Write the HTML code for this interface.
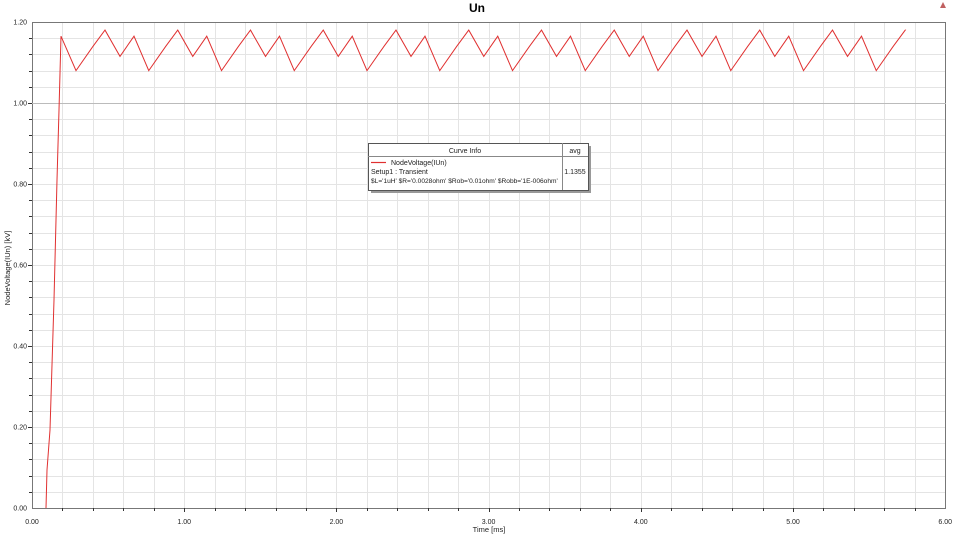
<!DOCTYPE html>
<html><head><meta charset="utf-8"><style>
body{margin:0;background:#fff;width:954px;height:540px;overflow:hidden;font-family:"Liberation Sans",sans-serif}
</style></head><body>
<svg id="s" width="954" height="540" xmlns="http://www.w3.org/2000/svg" font-family="Liberation Sans, sans-serif">
<text x="477" y="12" font-size="12" font-weight="bold" text-anchor="middle">Un</text>
<path d="M940 8 L943 2 L946 8 Z" fill="#c06060"/>
<g id="grid" stroke="#e4e4e4" stroke-width="1"></g>
<rect x="32.5" y="22.5" width="913" height="486" fill="none" stroke="#777"/>
<line x1="32" y1="103.5" x2="946" y2="103.5" stroke="#bbb"/>
<g id="ticks" stroke="#333"></g>
<g id="lbl" font-size="7" fill="#222"></g>
<text transform="translate(10,268) rotate(-90)" font-size="7.5" text-anchor="middle" fill="#222">NodeVoltage(IUn) [kV]</text>
<text x="489" y="532" font-size="7.5" text-anchor="middle" fill="#222">Time [ms]</text>
<path id="w" fill="none" stroke="#e03030" stroke-width="1"/>
<rect x="371" y="146" width="220" height="47" fill="#999"/>
<rect x="368.5" y="143.5" width="220" height="47" fill="#fff" stroke="#555"/>
<line x1="368" y1="156.5" x2="588" y2="156.5" stroke="#888"/>
<line x1="562.5" y1="143" x2="562.5" y2="190" stroke="#888"/>
<text x="465" y="153" font-size="7" text-anchor="middle" fill="#222">Curve Info</text>
<text x="575" y="153" font-size="7" text-anchor="middle" fill="#222">avg</text>
<line x1="371" y1="162.5" x2="386" y2="162.5" stroke="#e03030" stroke-width="1.2"/>
<text x="391" y="165" font-size="7" fill="#222">NodeVoltage(IUn)</text>
<text x="371" y="174" font-size="7" fill="#222">Setup1 : Transient</text>
<text x="371" y="183" font-size="6.6" fill="#222">$L='1uH' $R='0.0028ohm' $Rob='0.01ohm' $Robb='1E-006ohm'</text>
<text x="575" y="174" font-size="7" text-anchor="middle" fill="#222">1.1355</text>
</svg>
<script>
var N="http://www.w3.org/2000/svg";
function el(p,t,a,txt){var e=document.createElementNS(N,t);for(var k in a)e.setAttribute(k,a[k]);if(txt)e.textContent=txt;document.getElementById(p).appendChild(e);}
var X=function(t){return 32+t*152.2}, Y=function(v){return 508-v*405};
for(var i=1;i<30;i++){var x=Math.round(X(i*0.2))+.5;el("grid","line",{x1:x,y1:22,x2:x,y2:508});el("ticks","line",{x1:x,y1:508,x2:x,y2:i%5==0?512:511});}
for(var j=1;j<30;j++){var y=Math.round(Y(j*0.04))+.5;el("grid","line",{x1:32,y1:y,x2:946,y2:y});el("ticks","line",{x1:j%5==0?28:29,y1:y,x2:32,y2:y});}
for(var i=0;i<=6;i++)el("lbl","text",{x:X(i),y:524,"text-anchor":"middle"},i.toFixed(2));
for(var j=0;j<=6;j++)el("lbl","text",{x:27,y:Y(j*0.2)+2.5,"text-anchor":"end"},(j*0.2).toFixed(2));
var d="M46 508 L47 470 L50 430 L54 300 L57 180 L59 110 L61 "+Y(1.165);
var P=72.75,x0=76;
for(var k=0;k<12;k++){var b=x0+k*P;
d+=" L"+b+" "+Y(1.08)+" L"+(b+17)+" "+Y(1.14)+" L"+(b+29)+" "+Y(1.18);
if(b+29>=904)break;
d+=" L"+(b+44)+" "+Y(1.115)+" L"+(b+58)+" "+Y(1.165);}
d+=" L905 "+Y(1.18);
document.getElementById("w").setAttribute("d",d);
</script>
</body></html>
